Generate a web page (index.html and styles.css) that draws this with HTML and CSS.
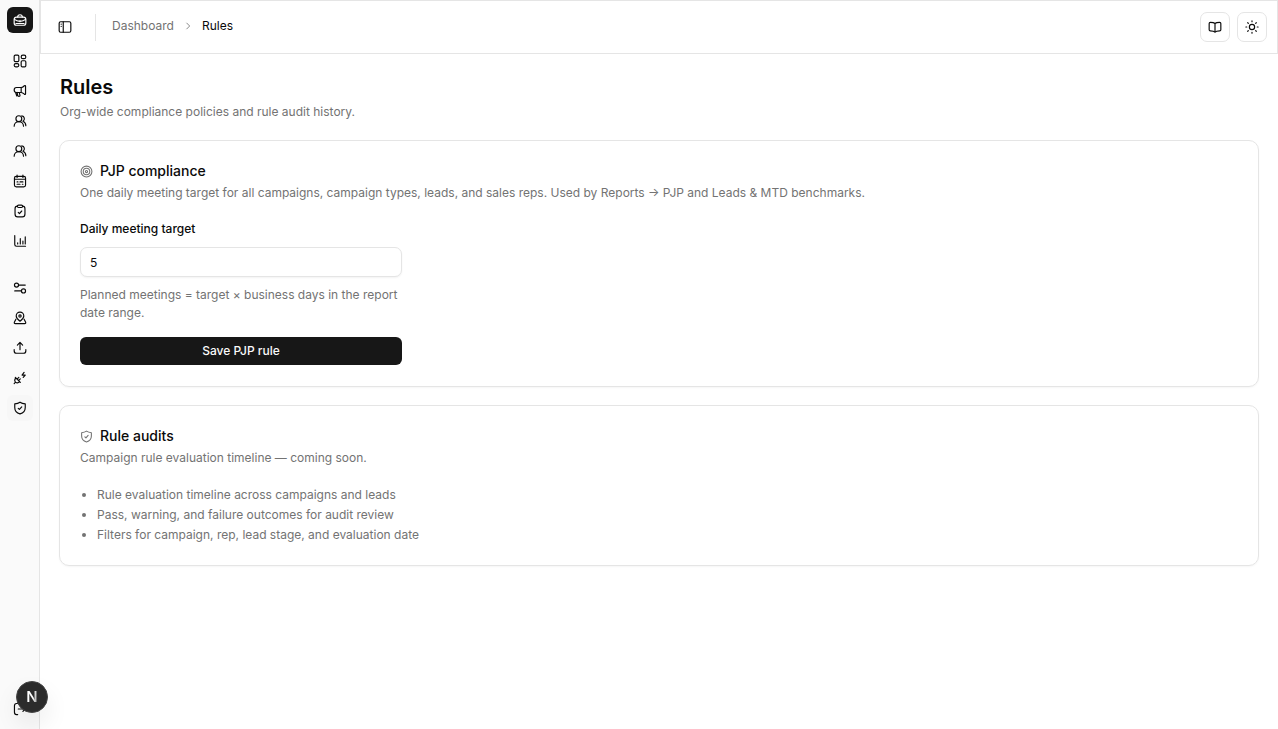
FILE: index.html
```html
<!DOCTYPE html>
<html lang="en">
<head>
<meta charset="utf-8">
<meta name="viewport" content="width=device-width, initial-scale=1">
<title>Rules</title>
<link rel="stylesheet" href="styles.css">
</head>
<body>
<div class="app">
	<aside class="sidebar">
		<a href="#" class="logo" aria-label="Home">
			<svg class="icon" viewBox="0 0 24 24"><rect x="2" y="7" width="20" height="14" rx="4"/><path d="M16 7c0-3-1-4-4-4S8 4 8 7M2.500 11c5 4.500 14 4.500 19 0M12 13v2M5 18h14"/></svg>
		</a>
		<nav class="menu" aria-label="Main">
			<a href="#" aria-label="Dashboard"><svg class="icon" viewBox="0 0 24 24"><rect x="2" y="2" width="8" height="11" rx="2"/><rect x="14" y="2" width="8" height="6" rx="3"/><rect x="14" y="11.500" width="8" height="10.500" rx="2"/><rect x="2" y="16.500" width="8" height="5.500" rx="2.700"/></svg></a>
			<a href="#" aria-label="Campaigns"><svg class="icon" viewBox="0 0 24 24"><path d="M14 6c2 0 4-1.500 5.500-3 1-.8 2-.3 2 1v12.500c0 1.300-1 1.800-2 1-1.500-1.500-3.500-3-5.500-3H6c-2.500 0-4-2-4-4.200S3.500 6 6 6zM14 6v8.500M7 14.500l1 4.500c.5 3 4 3 4 .500 0-1.500-1-2-1-4.500M4.500 14.500l2 6"/></svg></a>
			<a href="#" aria-label="Leads"><svg class="icon" viewBox="0 0 24 24"><circle cx="10" cy="8" r="5"/><path d="M2 21c0-4.500 3.500-8 8-8s8 3.500 8 8M15 3.200a5 5 0 0 1 2 9.300c3 1.200 5 3.800 5 7.500"/></svg></a>
			<a href="#" aria-label="Sales reps"><svg class="icon" viewBox="0 0 24 24"><circle cx="10" cy="8" r="5"/><path d="M2 21c0-4.500 3.500-8 8-8s8 3.500 8 8M15 3.200a5 5 0 0 1 2 9.300c3 1.200 5 3.800 5 7.500"/></svg></a>
			<a href="#" aria-label="Meetings"><svg class="icon" viewBox="0 0 24 24"><rect x="2.500" y="4" width="19" height="18" rx="3"/><path d="M7 2v4M17 2v4M3 9h18M12 13.500h5M7 13.500h1.500M7 17.500h5M16 17.500h1"/></svg></a>
			<a href="#" aria-label="Tasks"><svg class="icon" viewBox="0 0 24 24"><path d="M7.500 3.500C4.500 3.500 3.500 5 3.500 8v9c0 3.500 1 5 4.500 5h8c3.500 0 4.500-1.500 4.500-5V8c0-3-1-4.500-4-4.500"/><rect x="7.500" y="2" width="9" height="4" rx="2"/><path d="m9 14.500 2 2 4-4.500"/></svg></a>
			<a href="#" aria-label="Reports"><svg class="icon" viewBox="0 0 24 24"><path d="M3 2.500V18c0 2.500.5 3 3 3h15.500M8 17v-2M12.500 17V8M17 17v-5M21 17V5"/></svg></a>
		</nav>
		<nav class="menu" aria-label="Settings">
			<a href="#" aria-label="Preferences"><svg class="icon" viewBox="0 0 24 24"><circle cx="6" cy="7" r="3.500"/><path d="M9.500 7H21M3 17h11.500"/><circle cx="18" cy="17" r="3.500"/></svg></a>
			<a href="#" aria-label="Territories"><svg class="icon" viewBox="0 0 24 24"><path d="M12 17.500c-3.500-2.500-6.500-5.500-6.500-9a6.500 6.500 0 0 1 13 0c0 3.500-3 6.500-6.500 9z"/><circle cx="12" cy="8.500" r="2"/><path d="M5 14 2.500 19c-.8 1.800-.3 2.500 1.500 2.500h16c1.800 0 2.300-.7 1.500-2.500L19 14"/></svg></a>
			<a href="#" aria-label="Import"><svg class="icon" viewBox="0 0 24 24"><path d="M12 15V3M7.500 7 12 2.500 16.500 7M2 14.500v2C2 19.500 3 21 6 21h12c3 0 4-1.500 4-4.500v-2"/></svg></a>
			<a href="#" aria-label="Integrations"><svg class="icon" viewBox="0 0 24 24"><path d="M5 12c-2.500 2.500-2.500 5-.7 7 2 1.800 4.700 1.800 7.200-.7zM4 11l8.500 8.500M4.300 19 2 21.500M7 14l3-3M9.500 16.500l3-3M19 2.500l-3.500 4.500H21L17.500 11"/></svg></a>
			<a href="#" class="active" aria-label="Rules" aria-current="page"><svg class="icon" viewBox="0 0 24 24"><path d="M12 2c3 2 5 2.500 9 3v6c0 6-4 9.500-9 11-5-1.500-9-5-9-11V5c4-.5 6-1 9-3z"/><path d="m9 12.500 2 2 4-4.500"/></svg></a>
		</nav>
		<a href="#" class="logout" aria-label="Log out"><svg class="icon" viewBox="0 0 24 24"><path d="M8 2.500H6c-2.500 0-3.500 1-3.500 4v11c0 3 1 4 3.500 4h2M9 12h12M17 8l4 4-4 4"/></svg></a>
	</aside>
	<div class="page">
		<header class="topbar">
			<button type="button" class="toggle" aria-label="Toggle sidebar"><svg class="icon" viewBox="0 0 24 24"><rect x="2" y="3" width="20" height="18" rx="2.500"/><path d="M9 3v18M5.500 7v.1M5.500 11v.1"/></svg></button>
			<nav class="crumbs" aria-label="Breadcrumb">
				<a href="#">Dashboard</a>
				<svg class="icon chevron" viewBox="0 0 24 24"><path d="m9 5 7 7-7 7"/></svg>
				<span class="current">Rules</span>
			</nav>
			<div class="actions">
				<button type="button" aria-label="Guide"><svg class="icon" viewBox="0 0 24 24"><path d="M12 6c-1.500-1.500-3-2-8-2-1.500 0-2 .5-2 2v10.500c0 1.500.5 2 2 2 5 0 6.500.5 8 2.500 1.500-2 3-2.500 8-2.500 1.500 0 2-.5 2-2V6c0-1.500-.5-2-2-2-5 0-6.500.5-8 2zM12 6v15"/></svg></button>
				<button type="button" aria-label="Theme"><svg class="icon" viewBox="0 0 24 24"><circle cx="12" cy="12" r="4.500"/><path d="M12 1.500V3M12 21v1.500M1.500 12H3M21 12h1.500M4.700 4.700l1 1M18.300 18.300l1 1M19.300 4.700l-1 1M5.700 18.300l-1 1"/></svg></button>
			</div>
		</header>
		<main class="content">
			<div class="heading">
				<h1>Rules</h1>
				<p>Org-wide compliance policies and rule audit history.</p>
			</div>
			<section class="card">
				<h2><svg class="icon" viewBox="0 0 24 24"><circle cx="12" cy="12" r="10"/><circle cx="12" cy="12" r="6"/><circle cx="12" cy="12" r="2"/></svg>PJP compliance</h2>
				<p>One daily meeting target for all campaigns, campaign types, leads, and sales reps. Used by Reports → PJP and Leads &amp; MTD benchmarks.</p>
				<form class="rule">
					<label for="target">Daily meeting target</label>
					<input type="text" inputmode="numeric" id="target" value="5">
					<p>Planned meetings = target × business days in the report date range.</p>
					<button type="button">Save PJP rule</button>
				</form>
			</section>
			<section class="card">
				<h2><svg class="icon" viewBox="0 0 24 24"><path d="M12 2c3 2 5 2.500 9 3v6c0 6-4 9.500-9 11-5-1.500-9-5-9-11V5c4-.5 6-1 9-3z"/><path d="m9 12.500 2 2 4-4.500"/></svg>Rule audits</h2>
				<p>Campaign rule evaluation timeline — coming soon.</p>
				<ul>
					<li>Rule evaluation timeline across campaigns and leads</li>
					<li>Pass, warning, and failure outcomes for audit review</li>
					<li>Filters for campaign, rep, lead stage, and evaluation date</li>
				</ul>
			</section>
		</main>
	</div>
</div>
<button type="button" class="devtools" aria-label="Open developer tools"><span>N</span></button>
</body>
</html>
```
FILE: styles.css
```css
*{box-sizing:border-box; margin:0; padding:0;}
body{background:#fff; color:#0a0a0a; font:12px/18px Inter, "Noto Sans", sans-serif;}
a{color:inherit; text-decoration:none;}
button, input{font:inherit; color:inherit;}
button{cursor:pointer;}
.icon{width:14px; height:14px; flex:none; fill:none; stroke:currentColor; stroke-width:2; stroke-linecap:round; stroke-linejoin:round;}

.app{display:flex; min-height:100vh;}

.sidebar{display:flex; flex-direction:column; width:40px; padding:7px 6px 7px 7px; background:#fafafa; border-right:1px solid #e5e5e5;}
.sidebar a{display:flex; align-items:center; justify-content:center; width:26px; height:26px; border-radius:6px;}
.sidebar .logo{background:#171717; color:#fff; margin-bottom:15px; border-radius:6px;}
.menu{display:flex; flex-direction:column; gap:4px; margin-bottom:21px;}
.menu .active{background:#f7f7f7;}
.sidebar .logout{margin-top:auto;}

.page{flex:1; min-width:0;}
.topbar{display:flex; align-items:center; height:54px; padding:0 10px 0 11px; border:1px solid #e5e5e5;}
.toggle{display:flex; align-items:center; justify-content:center; width:26px; height:26px; border:0; background:none;}
.crumbs{display:flex; align-items:center; gap:9px; margin-left:17px; padding:0 0 2px 16px; height:27px; border-left:1px solid #e5e5e5;}
.crumbs a{color:#737373;}
.chevron{width:10px; height:10px; color:#737373;}
.actions{display:flex; gap:7px; margin-left:auto;}
.actions button{display:flex; align-items:center; justify-content:center; width:30px; height:30px; background:#fff; border:1px solid #e5e5e5; border-radius:7px;}

.content{display:flex; flex-direction:column; gap:18px; padding:20px 19px;}
.content p, .content ul{font-size:12px; color:#737373;}
.heading{padding:0 1px 1px;}
.heading h1{font-size:20px; line-height:27px; font-weight:600;}
.heading p{margin-top:2px;}

.card{padding:20px; border:1px solid #e5e5e5; border-radius:10px; box-shadow:0 1px 2px rgba(0,0,0,.04);}
.card h2{display:flex; align-items:center; gap:7px; font-size:14px; line-height:20px; font-weight:500;}
.card h2 .icon{width:13px; height:13px; color:#737373;}
.card h2+p{margin-top:3px;}

.rule{display:flex; flex-direction:column; max-width:322px; margin-top:18px;}
.rule label{font-weight:500;}
.rule input{height:30px; margin:9px 0; padding:0 9px; background:#fff; border:1px solid #e5e5e5; border-radius:7px; box-shadow:0 1px 2px rgba(0,0,0,.05);}
.rule button{height:28px; margin:15px 0 1px; background:#171717; color:#fafafa; border:0; border-radius:6px; font-weight:500;}

.card ul{margin-top:18px; padding-left:17px; line-height:20px;}

.devtools{position:fixed; left:16px; bottom:16px; width:32px; height:32px; border:1px solid #444; border-radius:50%; background:#2b2b2b; box-shadow:0 12px 24px rgba(0,0,0,.08);}
.devtools span{font-size:15px; font-weight:600; background:linear-gradient(100deg,#fff 55%,#777); -webkit-background-clip:text; background-clip:text; color:transparent;}
```
